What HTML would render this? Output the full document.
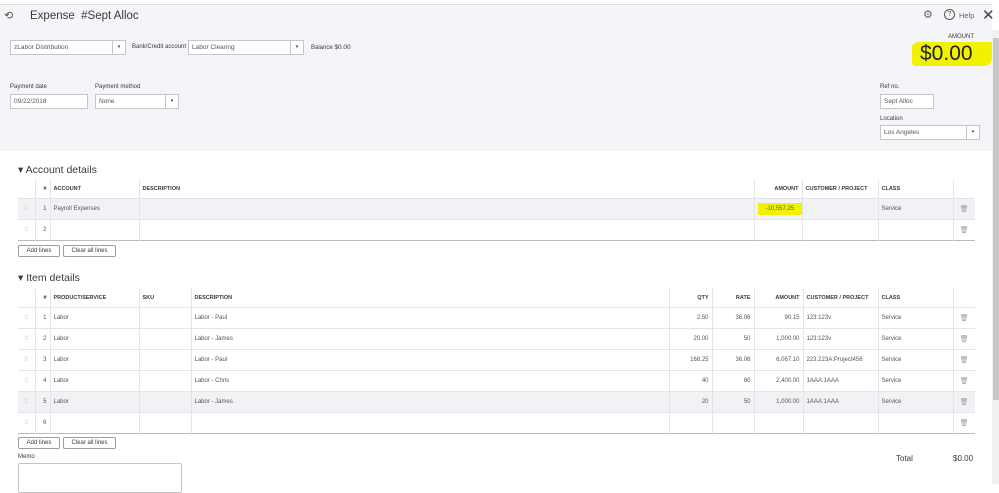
<!DOCTYPE html>
<html><head><style>
*{box-sizing:border-box;margin:0;padding:0}
body{width:999px;height:484px;overflow:hidden;background:#fff;font-family:"Liberation Sans",sans-serif;color:#393a3d;position:relative;font-size:7px}
.a{position:absolute}
.hdr{left:0;top:4px;width:992px;height:147px;background:#f4f5f8;border-top:1px solid #dcdcdc}
.in{position:absolute;background:#fff;border:1px solid #c4c6cb;font-size:6.5px;color:#555;padding-left:3px;line-height:13px;height:15px}
.dd{position:absolute;right:0;top:0;width:13px;height:13px;border-left:1px solid #c4c6cb;font-size:5px;text-align:center;line-height:13px;color:#333}
.lbl{font-size:6px;color:#393a3d}
table{border-collapse:collapse;table-layout:fixed;position:absolute;left:18px}
td,th{border-left:1px solid #e3e5e8;font-size:6px;height:21px;padding:0 3px;white-space:nowrap;overflow:hidden;color:#555}
th{font-weight:bold;color:#393a3d;font-size:5.5px;text-align:left;height:18px}
tr{border-bottom:1px solid #e3e5e8}
tr:last-child{border-bottom:1px solid #b8babd}
tr.s td{background:#f0f2f6}
td:first-child,th:first-child{border-left:none;color:#bbb;text-align:center}
.r{text-align:right}
.btn{position:absolute;height:12px;border:1px solid #9a9da2;border-radius:2px;background:#fff;font-size:6px;text-align:center;line-height:10px;color:#393a3d}
.tr{color:#999;font-size:7px;text-align:center}
h2{position:absolute;left:18px;font-weight:normal;font-size:10.5px;color:#393a3d}
</style></head><body>
<div class="a hdr"></div>
<div class="a" style="left:4px;top:9px;font-size:11px;color:#555">⟲</div>
<div class="a" style="left:30px;top:10px;font-size:11.5px;color:#393a3d">Expense&nbsp; #Sept Alloc</div>
<div class="a" style="left:923px;top:8px;font-size:11px;color:#666">⚙</div>
<div class="a" style="left:944px;top:9px;width:11px;height:11px;border:1px solid #555;border-radius:50%;font-size:7px;text-align:center;line-height:9px;color:#555">?</div>
<div class="a" style="left:959px;top:11px;font-size:7.5px;color:#666">Help</div>
<div class="a" style="left:982px;top:6px;font-size:15px;color:#444">✕</div>
<div class="in" style="left:10px;top:40px;width:116px">zLabor Distribution<div class="dd">▾</div></div>
<div class="a lbl" style="left:132px;top:44px">Bank/Credit account</div>
<div class="in" style="left:188px;top:40px;width:116px">Labor Clearing<div class="dd">▾</div></div>
<div class="a lbl" style="left:311px;top:44px">Balance <span style="font-size:6.5px">$0.00</span></div>
<div class="a lbl" style="left:948px;top:34px">AMOUNT</div>
<div class="a" style="left:912px;top:42px;width:80px;height:24px;background:#f2f200;border-radius:6px 2px 8px 3px"></div>
<div class="a" style="left:920px;top:42px;font-size:21px;color:#222">$0.00</div>
<div class="a lbl" style="left:10px;top:84px">Payment date</div>
<div class="in" style="left:10px;top:94px;width:78px">09/22/2018</div>
<div class="a lbl" style="left:95px;top:84px">Payment method</div>
<div class="in" style="left:95px;top:94px;width:84px">None<div class="dd">▾</div></div>
<div class="a lbl" style="left:880px;top:84px">Ref no.</div>
<div class="in" style="left:880px;top:94px;width:54px">Sept Alloc</div>
<div class="a lbl" style="left:880px;top:116px">Location</div>
<div class="in" style="left:880px;top:125px;width:100px">Los Angeles<div class="dd">▾</div></div>

<h2 style="top:164px">▾ Account details</h2>
<table style="top:180px;width:957px">
<col style="width:17px"><col style="width:15px"><col style="width:89px"><col style="width:615px"><col style="width:48px"><col style="width:76px"><col style="width:75px"><col style="width:22px">
<tr><th></th><th class="r">#</th><th>ACCOUNT</th><th>DESCRIPTION</th><th class="r">AMOUNT</th><th>CUSTOMER / PROJECT</th><th>CLASS</th><th></th></tr>
<tr class="s"><td>⁞⁞</td><td class="r">1</td><td>Payroll Expenses</td><td></td><td class="r"><span style="background:#f2f200;padding:3px 8px 3px 8px;margin-right:-3px">-10,557.25</span></td><td></td><td>Service</td><td class="tr">🗑</td></tr>
<tr><td>⁞⁞</td><td class="r">2</td><td></td><td></td><td></td><td></td><td></td><td class="tr">🗑</td></tr>
</table>
<div class="btn" style="left:18px;top:245px;width:42px">Add lines</div>
<div class="btn" style="left:63px;top:245px;width:53px">Clear all lines</div>

<h2 style="top:272px">▾ Item details</h2>
<table style="top:289px;width:957px">
<col style="width:17px"><col style="width:15px"><col style="width:89px"><col style="width:52px"><col style="width:478px"><col style="width:43px"><col style="width:42px"><col style="width:49px"><col style="width:75px"><col style="width:75px"><col style="width:22px">
<tr><th></th><th class="r">#</th><th>PRODUCT/SERVICE</th><th>SKU</th><th>DESCRIPTION</th><th class="r">QTY</th><th class="r">RATE</th><th class="r">AMOUNT</th><th>CUSTOMER / PROJECT</th><th>CLASS</th><th></th></tr>
<tr><td>⁞⁞</td><td class="r">1</td><td>Labor</td><td></td><td>Labor - Paul</td><td class="r">2.50</td><td class="r">36.06</td><td class="r">90.15</td><td>123:123v</td><td>Service</td><td class="tr">🗑</td></tr>
<tr><td>⁞⁞</td><td class="r">2</td><td>Labor</td><td></td><td>Labor - James</td><td class="r">20.00</td><td class="r">50</td><td class="r">1,000.00</td><td>123:123v</td><td>Service</td><td class="tr">🗑</td></tr>
<tr><td>⁞⁞</td><td class="r">3</td><td>Labor</td><td></td><td>Labor - Paul</td><td class="r">168.25</td><td class="r">36.06</td><td class="r">6,067.10</td><td>223:223A:Project456</td><td>Service</td><td class="tr">🗑</td></tr>
<tr><td>⁞⁞</td><td class="r">4</td><td>Labor</td><td></td><td>Labor - Chris</td><td class="r">40</td><td class="r">60</td><td class="r">2,400.00</td><td>1AAA:1AAA</td><td>Service</td><td class="tr">🗑</td></tr>
<tr class="s"><td>⁞⁞</td><td class="r">5</td><td>Labor</td><td></td><td>Labor - James</td><td class="r">20</td><td class="r">50</td><td class="r">1,000.00</td><td>1AAA:1AAA</td><td>Service</td><td class="tr">🗑</td></tr>
<tr><td>⁞⁞</td><td class="r">6</td><td></td><td></td><td></td><td></td><td></td><td></td><td></td><td></td><td class="tr">🗑</td></tr>
</table>
<div class="btn" style="left:18px;top:437px;width:42px">Add lines</div>
<div class="btn" style="left:63px;top:437px;width:53px">Clear all lines</div>
<div class="a lbl" style="left:18px;top:454px">Memo</div>
<div class="a" style="left:18px;top:463px;width:164px;height:30px;border:1px solid #c4c6cb;border-radius:2px"></div>
<div class="a" style="left:896px;top:454px;font-size:8px">Total</div>
<div class="a" style="left:953px;top:454px;font-size:8px">$0.00</div>
<div class="a" style="left:992px;top:30px;width:7px;height:454px;background:#f0f0f0"></div>
<div class="a" style="left:993px;top:38px;width:6px;height:362px;background:#c8c8c8"></div>
</body></html>
